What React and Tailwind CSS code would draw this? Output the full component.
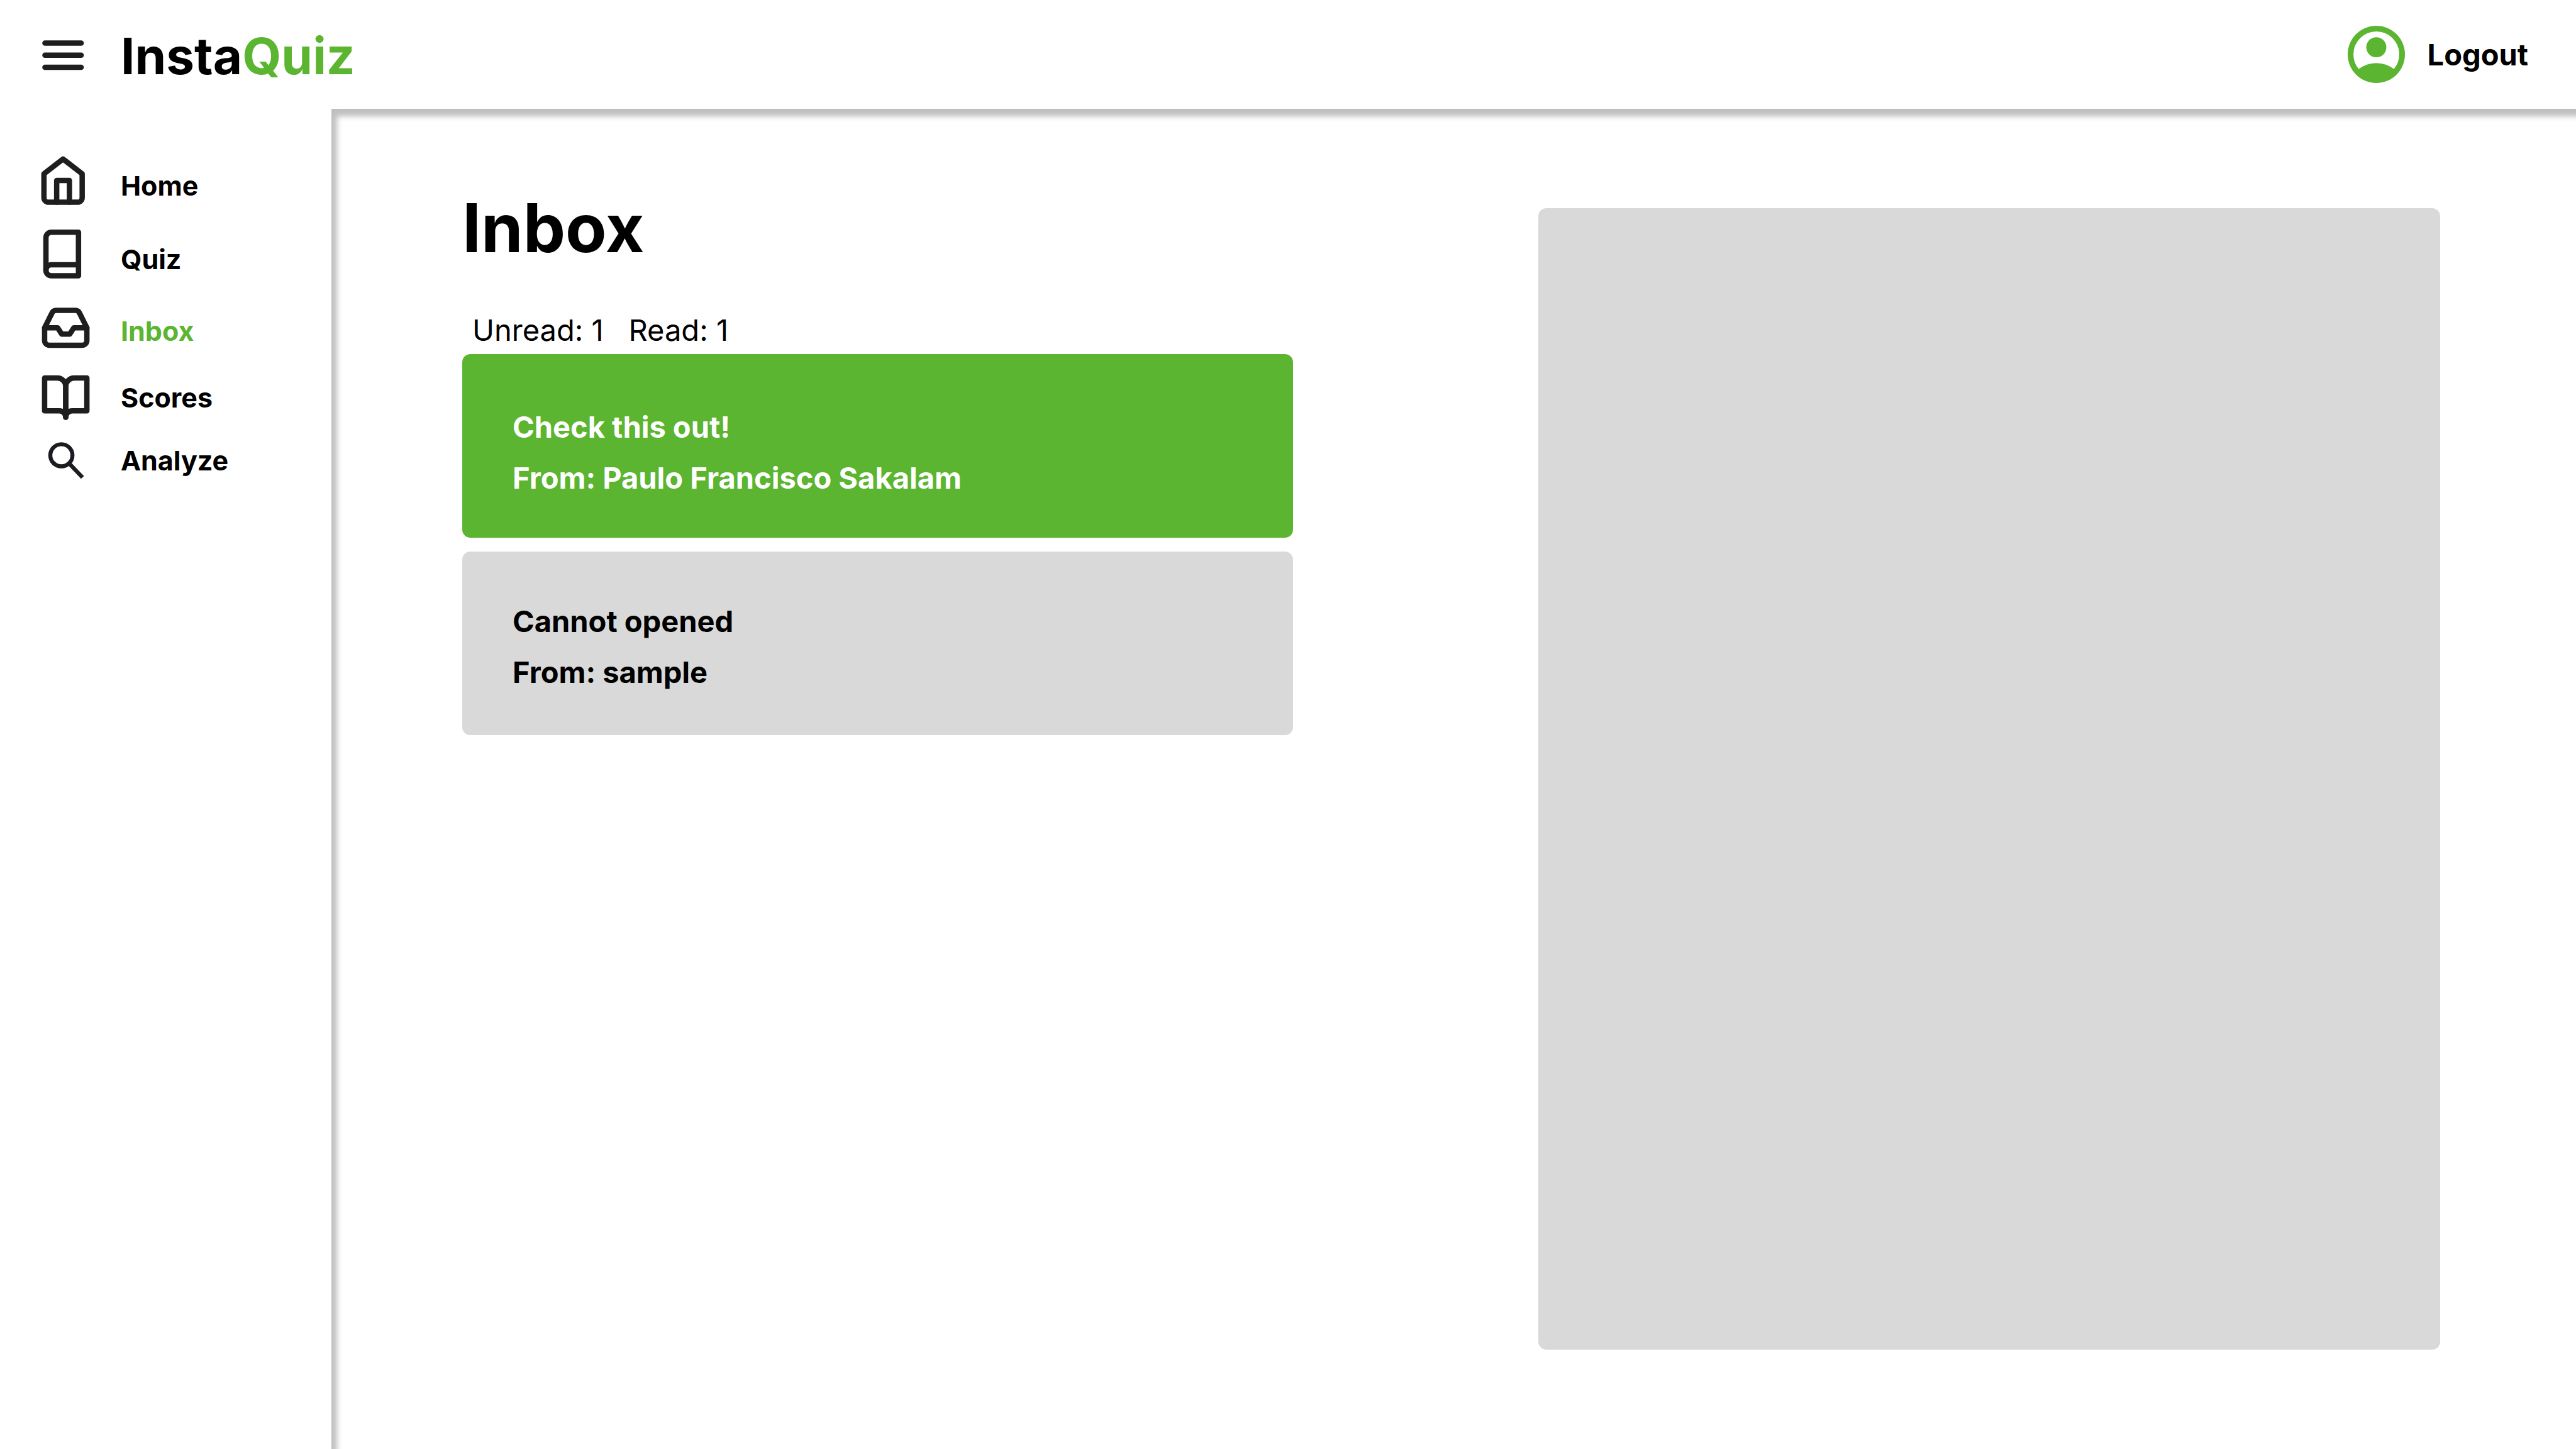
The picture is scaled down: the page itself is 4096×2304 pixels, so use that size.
const INK = "#1E1E1E";

function Stroke({ box, children }) {
  return (
    <svg width="80" height="96" viewBox={box} fill="none" stroke={INK} strokeWidth="16" strokeLinecap="round" strokeLinejoin="round" aria-hidden="true">
      {children}
    </svg>
  );
}

const HomeIcon = () => (
  <Stroke box="0 2 150 180">
    <path d="M11 55 68 11 125 55V126a14 14 0 0 1-14 14H25a14 14 0 0 1-14-14Z" />
    <path d="M49 140V75H87V140" />
  </Stroke>
);

const QuizIcon = () => (
  <Stroke box="0 2 150 180">
    <path d="M17 124a16 16 0 0 1 16-17H114" />
    <path d="M33 10H114V140H33a16 16 0 0 1-16-16V26A16 16 0 0 1 33 10Z" />
  </Stroke>
);

const InboxIcon = () => (
  <Stroke box="0 -21 150 180">
    <path d="M139 60H100L88 79H64L52 60H13" />
    <path d="M35 16 13 60V98a14 14 0 0 0 14 14H125a14 14 0 0 0 14-14V60L117 16a13 13 0 0 0-11-8H46a13 13 0 0 0-11 8Z" />
  </Stroke>
);

const ScoresIcon = () => (
  <Stroke box="0 -20 150 180">
    <path d="M13 10H51A25 25 0 0 1 76 35V127A19 19 0 0 0 57 108H13Z" />
    <path d="M139 10H101A25 25 0 0 0 76 35V127A19 19 0 0 1 95 108H139Z" />
  </Stroke>
);

const AnalyzeIcon = () => (
  <svg width="80" height="96" viewBox="0 -28 150 180" fill="none" stroke="#1D1B20" strokeWidth="12" aria-hidden="true">
    <circle cx="63" cy="45" r="33" />
    <path d="M85 68 126 111" />
  </svg>
);

const items = [
  { label: "Home", Icon: HomeIcon, row: "h-[117px]" },
  { label: "Quiz", Icon: QuizIcon, row: "h-[117px]" },
  { label: "Inbox", Icon: InboxIcon, row: "h-[110px]", active: true },
  { label: "Scores", Icon: ScoresIcon, row: "h-[103px]" },
  { label: "Analyze", Icon: AnalyzeIcon, row: "h-[97px]" },
];

const messages = [
  { title: "Check this out!", from: "Paulo Francisco Sakalam", card: "bg-[#5BB530] text-white pt-[75px] pb-[55px]" },
  { title: "Cannot opened", from: "sample", card: "bg-[#D9D9D9] text-black pt-[70px] pb-[60px]" },
];

export default function App() {
  return (
    <div className="flex min-h-screen flex-col overflow-hidden bg-white font-['Inter',sans-serif] text-black">
      <header className="flex h-[173px] items-center justify-between pr-[76px] pl-[64px]">
        <div className="flex items-center gap-[56px]">
          <button type="button" aria-label="Menu">
            <svg width="72" height="56" viewBox="0 0 135 105" stroke={INK} strokeWidth="16" strokeLinecap="round" aria-hidden="true">
              <path d="M14 18H122M14 54H122M14 90H122" />
            </svg>
          </button>
          <a href="#" className="pt-1 text-[80px] leading-none font-bold">
            Insta<span className="text-[#5BB530]">Quiz</span>
          </a>
        </div>
        <button type="button" className="flex items-center gap-9 text-[47px] leading-none font-bold">
          <svg width="91" height="91" viewBox="2 2 20 20" fill="#5BB530" aria-hidden="true">
            <path
              fillRule="evenodd"
              d="M12 2a10 10 0 1 0 0 20 10 10 0 0 0 0-20ZM5.85 17.1q1.275-.975 2.85-1.537T12 15t3.3.563 2.85 1.537q.875-1.025 1.363-2.325T20 12q0-3.325-2.337-5.663T12 4 6.337 6.338 4 12q0 1.475.488 2.775T5.85 17.1Z"
            />
            <circle cx="12" cy="9.5" r="3.5" />
          </svg>
          Logout
        </button>
      </header>

      <div className="flex flex-1">
        <nav className="flex w-[527px] shrink-0 flex-col pt-[64px] pl-[64px]">
          {items.map(({ label, Icon, row, active }) => (
            <a key={label} href="#" className={`flex items-center gap-12 text-[43px] leading-none font-bold ${row} ${active ? "text-[#5BB530]" : ""}`}>
              <Icon />
              {label}
            </a>
          ))}
        </nav>

        <main className="flex flex-1 justify-between pt-[136px] pr-[216px] pb-[158px] pl-[208px] shadow-[inset_9px_12px_9px_rgba(0,0,0,0.25)]">
          <section className="w-[42%]">
            <h1 className="text-[107px] leading-none font-bold">Inbox</h1>
            <p className="mt-[85px] flex gap-10 pl-4 text-[47px] leading-none">
              <span>Unread: 1</span>
              <span>Read: 1</span>
            </p>
            <ul className="mt-[15px] flex flex-col gap-[22px]">
              {messages.map((m) => (
                <li key={m.title}>
                  <button type="button" className={`block w-full rounded-[13px] px-20 text-left text-[47px] leading-[81px] font-bold ${m.card}`}>
                    <span className="block">{m.title}</span>
                    <span className="block">From: {m.from}</span>
                  </button>
                </li>
              ))}
            </ul>
          </section>
          <section aria-label="Message" className="mt-[22px] w-[45.6%] rounded-[13px] bg-[#D9D9D9]" />
        </main>
      </div>
    </div>
  );
}
